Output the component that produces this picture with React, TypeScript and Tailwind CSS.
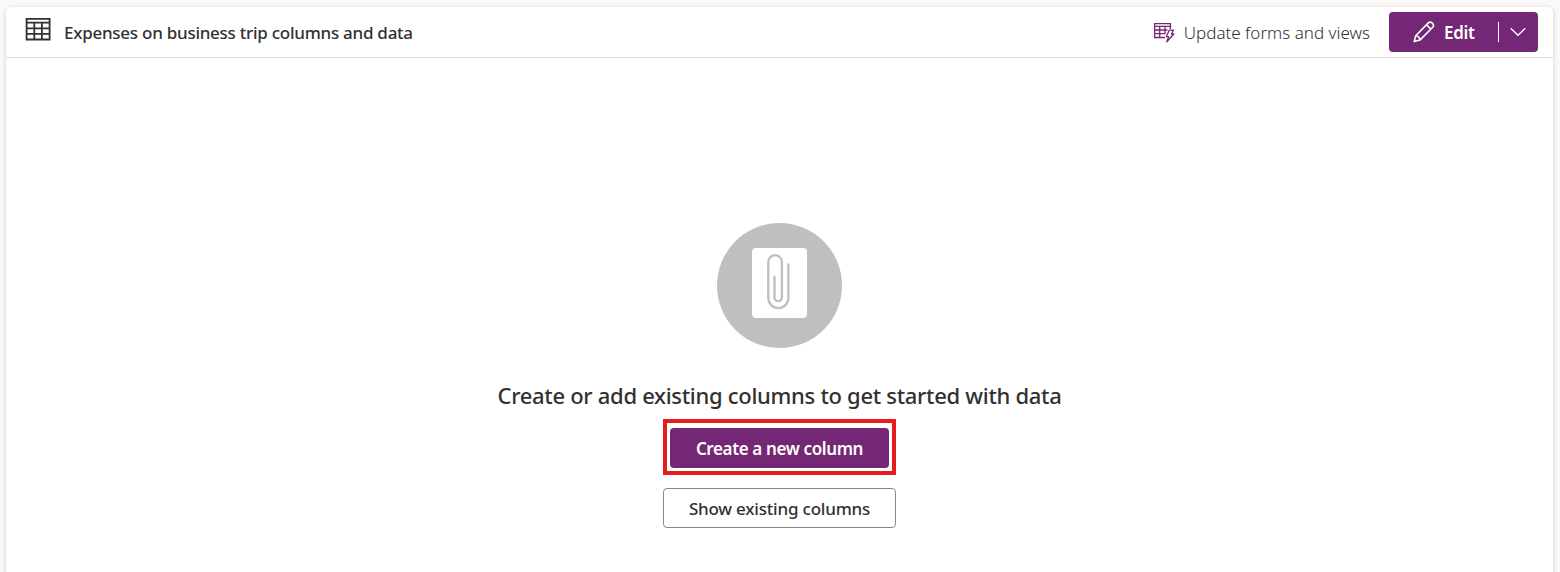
import React from "react";

function TableIcon() {
  return (
    <svg width="26" height="24" viewBox="0 0 26 24" fill="none" stroke="#323130" strokeWidth="1.8" className="mt-[11px] block shrink-0 self-start">
      <path d="M1.6 .9H24.6V21.5H1.6ZM1.6 4.6H24.6M1.6 10.4H24.6M1.6 15.9H24.6M9.3 4.6V21.5M16.9 4.6V21.5" />
    </svg>
  );
}

function TableBoltIcon() {
  return (
    <svg width="21" height="20" viewBox="0 0 21 20" fill="none" stroke="#742774" strokeWidth="1.3" className="mt-px block shrink-0">
      <path d="M11 14.5H.6V.6H16.4V6M.6 3.4H16.4M.6 7H13.5M.6 10.7H11.5M5.7 3.4V14.5M11 3.4V11" />
      <path d="M15.2 7.2H19.4L17.5 11H19.8L12.8 18.7L14.6 13.6H12.3Z" strokeLinejoin="round" />
    </svg>
  );
}

function PencilIcon() {
  return (
    <svg width="22" height="22" viewBox="0 0 22 22" fill="none" stroke="#fff" strokeWidth="1.6" strokeLinejoin="round" className="block shrink-0">
      <path d="M1.2 20.6L2.7 14.7L15.3 1.9C17.9 -.4 22 3.5 19.7 6.3L6.9 19.1ZM2.7 14.7C5 14.6 6.9 16.8 6.9 19.1M13.5 3.7L17.9 8.1" />
    </svg>
  );
}

function PaperclipIcon() {
  return (
    <svg width="55" height="70" viewBox="0 0 55 70" fill="none" stroke="#bfbfbf" strokeWidth="2.3" strokeLinecap="round" className="block rounded-sm bg-white">
      <path d="M36.4 16.3V50A10.05 10.05 0 0 1 16.3 50V14A6.8 6.8 0 0 1 29.9 14V49.5A3.7 3.7 0 0 1 22.5 49.5V28.8" />
    </svg>
  );
}

export default function App() {
  return (
    <div className="h-[572px] w-[1560px] overflow-hidden bg-[#faf9f8] pl-1.5 pt-[7px] font-['Noto_Sans','Open_Sans',sans-serif] text-[#323130]">
      <main className="h-[580px] w-[1547px] rounded-[5px] bg-white shadow-[0_1px_5px_rgba(0,0,0,0.16)]">
        <header className="flex h-[51px] items-center border-b border-[#e1dfdd] pl-[19px] pr-[15px]">
          <TableIcon />
          <h1 className="ml-[13px] whitespace-nowrap pt-0.5 text-[17px] font-medium leading-6 tracking-[-0.26px]">
            <span>Expenses on business trip columns and data</span>
          </h1>
          <button className="ml-auto flex items-center gap-[9px] whitespace-nowrap text-[17px] font-light leading-6">
            <TableBoltIcon />
            <span className="pt-0.5">Update forms and views</span>
          </button>
          <div className="ml-[19px] flex h-10 w-[149px] shrink-0 items-center rounded-sm bg-[#742774] text-white">
            <button className="flex w-[109px] items-center gap-[9px] pl-[24px] text-[17px] font-semibold leading-6 tracking-[-0.3px]">
              <PencilIcon />
              <span className="pt-0.5">Edit</span>
            </button>
            <span className="h-5 w-px bg-white" />
            <button className="ml-[11px]" aria-label="More edit options">
              <svg width="16" height="10" viewBox="0 0 16 10" fill="none" stroke="#fff" strokeWidth="1.3" className="block">
                <path d="M.7 1.2L8 8.3L15.3 1.2" />
              </svg>
            </button>
          </div>
        </header>
        <section className="flex flex-col items-center pt-[165px]">
          <div className="flex h-[125px] w-[125px] items-center justify-center rounded-full bg-[#bfbfbf] pb-[5px]">
            <PaperclipIcon />
          </div>
          <h2 className="mt-[31px] whitespace-nowrap text-[22px] font-medium leading-8 tracking-[-0.3px]">
            <span>Create or add existing columns to get started with data</span>
          </h2>
          <div className="mt-2 border-4 border-[#e81c1f] px-[3px] pb-[3px] pt-[5px]">
            <button className="block h-10 w-[219px] whitespace-nowrap rounded-sm bg-[#742774] pt-0.5 text-[17px] font-semibold tracking-[-0.37px] text-white">
              <span>Create a new column</span>
            </button>
          </div>
          <button className="mt-[13px] h-10 w-[233px] whitespace-nowrap rounded-sm border border-[#8a8886] pt-0.5 text-[17px] font-medium tracking-[-0.2px]">
            <span>Show existing columns</span>
          </button>
        </section>
      </main>
    </div>
  );
}
